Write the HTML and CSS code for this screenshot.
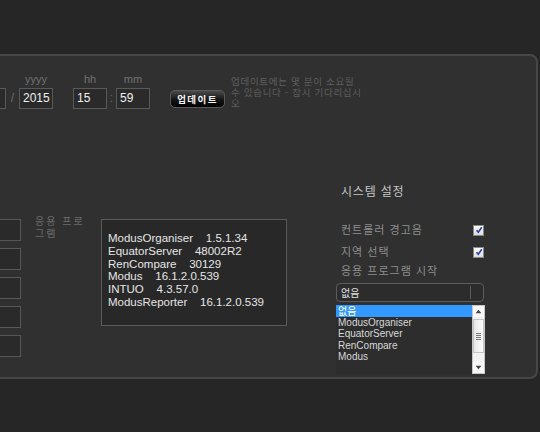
FILE: index.html
```html
<!DOCTYPE html>
<html lang="ko">
<head>
<meta charset="utf-8">
<link rel="stylesheet" href="styles.css">
</head>
<body>
<div class="panel">
  <div class="top-row">
    <div class="field first">
      <span class="field-label">&nbsp;</span>
      <span class="box">&nbsp;</span>
    </div>
    <span class="sep">/</span>
    <div class="field">
      <span class="field-label">yyyy</span>
      <span class="box">2015</span>
    </div>
    <div class="field gap-left">
      <span class="field-label">hh</span>
      <span class="box">15</span>
    </div>
    <span class="sep colon">:</span>
    <div class="field">
      <span class="field-label">mm</span>
      <span class="box">59</span>
    </div>
    <button class="update-btn">업데이트</button>
    <p class="note">업데이트에는 몇 분이 소요될 수 있습니다 - 잠시 기다리십시오</p>
  </div>

  <div class="main">
    <div class="left-boxes">
      <span class="small-box"></span>
      <span class="small-box"></span>
      <span class="small-box"></span>
      <span class="small-box"></span>
      <span class="small-box"></span>
    </div>
    <p class="app-label">응용 프로<br>그램</p>
    <div class="versions">
      <div>ModusOrganiser&nbsp;&nbsp;&nbsp; 1.5.1.34</div>
      <div>EquatorServer&nbsp;&nbsp;&nbsp; 48002R2</div>
      <div>RenCompare&nbsp;&nbsp;&nbsp; 30129</div>
      <div>Modus&nbsp;&nbsp;&nbsp; 16.1.2.0.539</div>
      <div>INTUO&nbsp;&nbsp;&nbsp; 4.3.57.0</div>
      <div>ModusReporter&nbsp;&nbsp;&nbsp; 16.1.2.0.539</div>
    </div>
    <div class="settings">
      <h2 class="settings-title">시스템 설정</h2>
      <div class="setting-row r1">
        <span>컨트롤러 경고음</span>
        <span class="check"><svg viewBox="0 0 10 10" width="10" height="10"><path d="M2.5 5.2 L4.3 7.3 L7.8 2.2" fill="none" stroke="#2a3fb0" stroke-width="1.6"/></svg></span>
      </div>
      <div class="setting-row r2">
        <span>지역 선택</span>
        <span class="check"><svg viewBox="0 0 10 10" width="10" height="10"><path d="M2.5 5.2 L4.3 7.3 L7.8 2.2" fill="none" stroke="#2a3fb0" stroke-width="1.6"/></svg></span>
      </div>
      <div class="setting-row r3"><span>응용 프로그램 시작</span></div>
      <div class="select"><span>없음</span><span class="select-div"></span></div>
      <div class="listbox">
        <ul class="options">
          <li class="selected">없음</li>
          <li>ModusOrganiser</li>
          <li>EquatorServer</li>
          <li>RenCompare</li>
          <li>Modus</li>
        </ul>
        <div class="scrollbar">
          <span class="sb-btn"><svg viewBox="0 0 8 6" width="7" height="5"><path d="M0.5 5 L4 1 L7.5 5 Z" fill="#444"/></svg></span>
          <span class="sb-thumb"><span class="grip"></span><span class="grip"></span><span class="grip"></span><span class="grip"></span></span>
          <span class="sb-track"></span>
          <span class="sb-btn"><svg viewBox="0 0 8 6" width="7" height="5"><path d="M0.5 1 L4 5 L7.5 1 Z" fill="#444"/></svg></span>
        </div>
      </div>
    </div>
  </div>
</div>
</body>
</html>
```

FILE: styles.css
```css
html, body {
  margin: 0;
  padding: 0;
  background: #262626;
  width: 540px;
  height: 432px;
  overflow: hidden;
  font-family: "Liberation Sans", Arial, "Noto Sans CJK KR", sans-serif;
}

.panel {
  box-sizing: border-box;
  margin: 54px 0 0 -40px;
  width: 578px;
  height: 325px;
  background: #303030;
  border: 2px solid #474747;
  border-radius: 8px;
}

.top-row {
  display: flex;
  align-items: flex-end;
  padding-top: 13px;
}

.field {
  display: flex;
  flex-direction: column;
  align-items: center;
  width: 34px;
}

.field.first { margin-left: 10px; }
.field.gap-left { margin-left: 20px; }

.field-label {
  font-size: 11px;
  line-height: 13px;
  color: #707070;
  margin-bottom: 2px;
}

.box {
  box-sizing: border-box;
  width: 34px;
  height: 21px;
  border: 1px solid #595959;
  background: #2a2a2a;
  color: #f0f0f0;
  font-size: 12px;
  line-height: 19px;
  padding-left: 3px;
}

.sep {
  width: 13px;
  text-align: center;
  font-size: 12px;
  line-height: 21px;
  color: #6a6a6a;
}

.sep.colon { width: 9px; }

.update-btn {
  margin: 0 0 1px 20px;
  width: 55px;
  height: 18px;
  padding: 0;
  border: 1px solid #5a5a5a;
  border-radius: 5px;
  background: linear-gradient(#4a4a4a, #141414 55%, #000);
  color: #f4f4f4;
  font-family: "Noto Sans CJK KR", sans-serif;
  font-size: 9.5px;
  font-weight: bold;
  letter-spacing: 1.4px;
  line-height: 16px;
}

.note {
  align-self: flex-start;
  margin: 7px 0 0 6px;
  width: 133px;
  font-family: "Noto Sans CJK KR", sans-serif;
  font-size: 9.5px;
  line-height: 11px;
  color: #5e5e5e;
  letter-spacing: 0.7px;
}

.main {
  display: flex;
  align-items: flex-start;
  margin-top: 75px;
}

.left-boxes {
  display: flex;
  flex-direction: column;
  gap: 7px;
  margin: 35px 0 0 19px;
}

.small-box {
  box-sizing: border-box;
  width: 40px;
  height: 22px;
  border: 1px solid #575757;
  background: #2a2a2a;
}

.app-label {
  margin: 31px 0 0 14px;
  width: 55px;
  font-family: "Noto Sans CJK KR", sans-serif;
  font-size: 10px;
  line-height: 12px;
  letter-spacing: 2px;
  color: #6c6c6c;
}

.versions {
  box-sizing: border-box;
  margin: 35px 0 0 11px;
  width: 186px;
  height: 107px;
  border: 1px solid #5a5a5a;
  background: #282828;
  padding: 12px 0 0 6px;
  color: #e6e6e6;
  font-size: 11.5px;
  line-height: 12.8px;
}

.settings {
  margin-left: 49px;
  width: 150px;
}

.settings-title {
  margin: 0 0 0 5px;
  font-family: "Noto Sans CJK KR", sans-serif;
  font-size: 12px;
  font-weight: normal;
  line-height: 14px;
  letter-spacing: 0.8px;
  color: #c4c4c4;
}

.setting-row {
  display: flex;
  align-items: center;
  justify-content: space-between;
  padding: 0 2px 0 5px;
  font-family: "Noto Sans CJK KR", sans-serif;
  font-size: 11px;
  line-height: 14px;
  letter-spacing: 1px;
  color: #8e8e8e;
}

.setting-row.r1 { margin-top: 24px; }
.setting-row.r2 { margin-top: 8px; }
.setting-row.r3 { margin-top: 5px; }

.check {
  box-sizing: border-box;
  display: flex;
  width: 11px;
  height: 11px;
  border: 1px solid #8a8a8a;
  background: linear-gradient(#ffffff, #dcdcdc);
  margin-top: 2px;
}

.check svg { display: block; margin: -0.5px; }

.select {
  box-sizing: border-box;
  display: flex;
  align-items: center;
  justify-content: space-between;
  margin-top: 6px;
  width: 148px;
  height: 19px;
  border: 1px solid #5c5c5c;
  border-radius: 4px;
  background: #2c2c2c;
  padding: 0 12px 0 4px;
  font-family: "Noto Sans CJK KR", sans-serif;
  font-size: 10px;
  color: #e0e0e0;
}

.select-div {
  width: 1px;
  height: 13px;
  background: #5c5c5c;
}

.listbox {
  display: flex;
  margin-top: 3px;
  width: 149px;
  height: 69px;
  background: #2d2d2d;
}

.options {
  flex: 1;
  margin: 0;
  padding: 0;
  list-style: none;
  font-size: 10px;
  line-height: 11.6px;
  color: #d8d8d8;
}

.options li { padding-left: 2px; }

.options li.selected {
  background: #3399ff;
  color: #ffffff;
  font-family: "Noto Sans CJK KR", sans-serif;
}

.scrollbar {
  box-sizing: border-box;
  display: flex;
  flex-direction: column;
  width: 13px;
  background: #f2f2f2;
  border: 1px solid #c8c8c8;
}

.sb-btn {
  display: flex;
  align-items: center;
  justify-content: center;
  height: 11px;
  background: #fafafa;
}

.sb-thumb {
  display: flex;
  flex-direction: column;
  align-items: center;
  justify-content: center;
  gap: 1px;
  height: 32px;
  margin: 2px 0 0;
  border: 1px solid #c4c4c4;
  background: linear-gradient(90deg, #e6e6e6, #fdfdfd);
}

.grip {
  width: 5px;
  height: 1px;
  background: #777;
}

.sb-track { flex: 1; }
```
